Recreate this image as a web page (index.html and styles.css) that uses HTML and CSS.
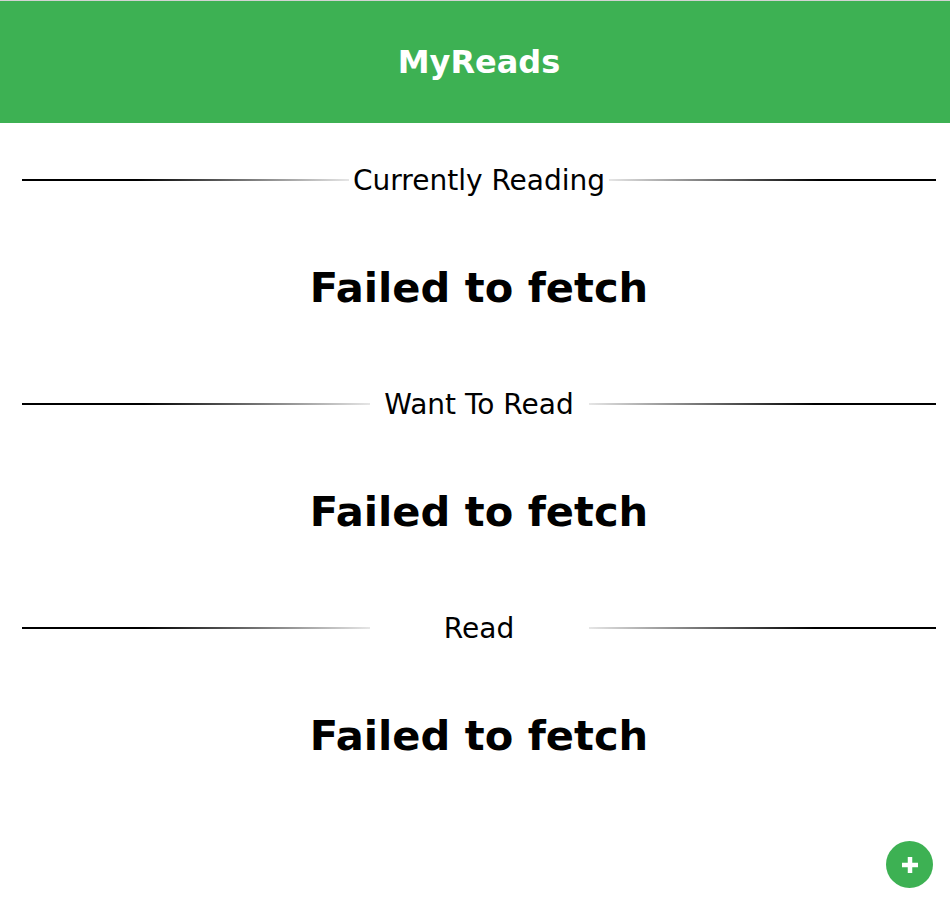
FILE: index.html
```html
<!DOCTYPE html>
<html lang="en">
<head>
<meta charset="utf-8">
<title>MyReads</title>
<link rel="stylesheet" href="styles.css">
</head>
<body>
<div class="app">
  <header class="title-bar">
    <h1 class="title">MyReads</h1>
  </header>
  <main class="shelves">
    <section class="shelf">
      <div class="shelf-heading"><span class="shelf-name">Currently Reading</span></div>
      <h2 class="error">Failed to fetch</h2>
    </section>
    <section class="shelf">
      <div class="shelf-heading"><span class="shelf-name">Want To Read</span></div>
      <h2 class="error">Failed to fetch</h2>
    </section>
    <section class="shelf">
      <div class="shelf-heading"><span class="shelf-name">Read</span></div>
      <h2 class="error">Failed to fetch</h2>
    </section>
  </main>
  <a class="add-button" href="#" aria-label="Add a book">
    <svg width="20" height="20" viewBox="0 0 20 20"><path d="M10 2v16M2 10h16" stroke="#fff" stroke-width="4.5" stroke-linecap="butt"/></svg>
  </a>
</div>
</body>
</html>
```

FILE: styles.css
```css
html, body {
  margin: 0;
  padding: 0;
  background: #fff;
}

body {
  font-family: "DejaVu Sans", Verdana, sans-serif;
  color: #000;
}

.title-bar {
  border-top: 1px solid #d3d3d3;
  background: #3db153;
  height: 122px;
  display: flex;
  align-items: center;
  justify-content: center;
  padding-left: 8px;
}

.title {
  margin: 0;
  color: #fff;
  font-size: 32px;
  font-weight: bold;
  line-height: 40px;
}

.shelves {
  margin: 0 14px 0 22px;
  padding-top: 41px;
}

.shelf {
  height: 224px;
}

.shelf-heading {
  display: flex;
  align-items: center;
}

.shelf-heading::before,
.shelf-heading::after {
  content: "";
  flex: 1;
  height: 2px;
}

.shelf-heading::before {
  background: linear-gradient(to right, #000 35%, #e6e6e6);
}

.shelf-heading::after {
  background: linear-gradient(to left, #000 35%, #e6e6e6);
}

.shelf-name {
  min-width: 211px;
  padding: 0 4px;
  text-align: center;
  font-size: 28px;
  line-height: 32px;
  transform: translateY(1px);
}

.error {
  margin: 68px 0 0;
  text-align: center;
  font-size: 41.6px;
  font-weight: bold;
  line-height: 48px;
}

.add-button {
  position: fixed;
  right: 17px;
  bottom: 20px;
  width: 47px;
  height: 47px;
  border-radius: 50%;
  background: #3db153;
  display: flex;
  align-items: center;
  justify-content: center;
}
```
